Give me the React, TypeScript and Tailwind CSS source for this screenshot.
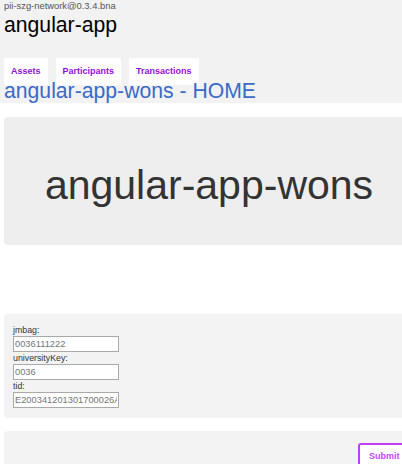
const tabs = ["Assets", "Participants", "Transactions"];

const fields = [
  { label: "jmbag:", value: "0036111222" },
  { label: "universityKey:", value: "0036" },
  { label: "tid:", value: "E200341201301700026A" },
];

const App = () => {
  return (
    <div
      className="w-[402px] h-[464px] overflow-hidden bg-white"
      style={{ fontFamily: '"Liberation Sans", Arial, sans-serif' }}
    >
      <div className="w-[414px]">
        {/* header */}
        <div className="bg-[#f2f2f2] pl-[4px]">
          <div className="text-[9.4px] leading-[12px] text-[#555]">pii-szg-network@0.3.4.bna</div>
          <div className="text-[21.2px] leading-[24px] text-black mt-[1px]">angular-app</div>
          <div className="flex gap-[8px] h-[21px] mt-[21px]">
            {tabs.map((tab) => (
              <div
                key={tab}
                className="h-[27px] bg-white px-[7px] text-[9px] font-bold leading-[27px] text-[#9210d2] shrink-0"
              >
                {tab}
              </div>
            ))}
          </div>
          <div className="relative text-[21.2px] leading-[24px] text-[#3a6bc8]">angular-app-wons - HOME</div>
        </div>

        {/* jumbotron */}
        <div className="ml-[4px] mt-[14px] w-[410px] rounded-[4px] bg-[#eeeeee] pt-[45px] pb-[36px] text-center text-[41px] leading-[47px] text-[#333]">
          angular-app-wons
        </div>

        {/* form */}
        <div className="ml-[4px] mt-[69px] w-[410px] rounded-[4px] bg-[#f3f3f3] pl-[9px] pt-[10px] pb-[10px]">
          {fields.map((f) => (
            <div key={f.label}>
              <div className="h-[12px] text-[8.8px] leading-[12px] text-[#333]">{f.label}</div>
              <input
                readOnly
                value={f.value}
                className="block w-[106px] h-[16px] border border-[#a9a9a9] bg-white px-[1px] text-[9.3px] text-[#757575] outline-none"
                style={{ fontFamily: '"Liberation Sans", Arial, sans-serif' }}
              />
            </div>
          ))}
        </div>

        {/* actions */}
        <div className="ml-[4px] mt-[13px] w-[410px] h-[60px] rounded-[4px] bg-[#f3f3f3] pt-[11px] pl-[354px]">
          <button
            className="h-[28px] rounded-[3px] border-2 border-[#c23ef2] bg-white px-[9px] text-[9px] font-bold text-[#c24cf0]"
            style={{ fontFamily: '"Liberation Sans", Arial, sans-serif' }}
          >
            Submit
          </button>
        </div>
      </div>
    </div>
  );
};

export default App;
